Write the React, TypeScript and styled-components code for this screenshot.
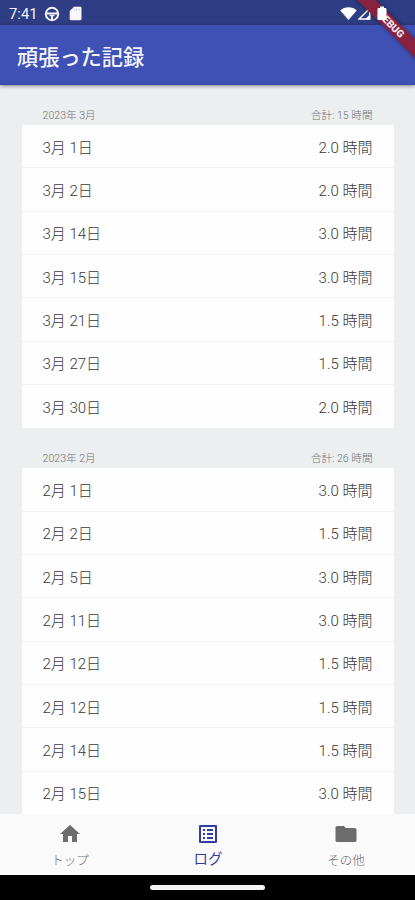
import React from 'react';
import styled, { createGlobalStyle } from 'styled-components';

const GlobalStyle = createGlobalStyle`
  * { box-sizing: border-box; }
  body { margin: 0; background: #eceef0; }
`;

const Screen = styled.div`
  position: relative;
  display: flex;
  flex-direction: column;
  width: 415px;
  height: 900px;
  overflow: hidden;
  background: #eceef0;
  font-family: Roboto, 'Noto Sans CJK JP', sans-serif;
`;

const StatusBar = styled.div`
  flex: none;
  display: flex;
  align-items: center;
  height: 25px;
  padding: 2px 27px 0 9px;
  background: #2f3d84;
  color: #f2f3fa;
  font-size: 14.8px;
`;

const StatusIcon = styled.svg<{ $gap: number }>`
  flex: none;
  display: block;
  margin-left: ${(p) => p.$gap}px;
`;

const Spacer = styled.div`
  flex: 1;
`;

const BatteryIcon = styled(StatusIcon)`
  position: relative;
  z-index: 3;
`;

const AppBar = styled.header`
  flex: none;
  display: flex;
  align-items: center;
  position: relative;
  z-index: 1;
  height: 60px;
  padding: 6px 17px 0;
  background: #3f51b5;
  border-bottom: 1px solid #3445a6;
  box-shadow: 0 1px 4px rgba(0, 0, 0, 0.45);
`;

const Title = styled.h1`
  margin: 0;
  color: #f4f5fc;
  font-size: 21.2px;
  font-weight: 500;
  line-height: 30px;
`;

const Log = styled.main`
  flex: 1;
  min-height: 0;
  overflow: hidden;
  padding: 20px 21px 0 21.5px;
`;

const Month = styled.section`
  margin-bottom: 20px;
`;

const MonthHeader = styled.div`
  display: flex;
  justify-content: space-between;
  height: 20px;
  padding: 1px 21.5px 0 21px;
  color: #6e7072;
  font-size: 10.6px;
  font-weight: 300;
  line-height: 20px;
`;

const Card = styled.div`
  background: #fefefe;
  border-radius: 2px;
`;

const Row = styled.div`
  display: flex;
  align-items: center;
  justify-content: space-between;
  height: 43.33px;
  padding: 0 21.5px 0 21px;
  border-bottom: 1px solid #f1f3f3;
  color: #383838;
  font-size: 15px;
  font-weight: 300;

  &:last-child { border-bottom-color: transparent; }
`;

const NavBar = styled.nav`
  flex: none;
  display: grid;
  grid-template-columns: repeat(3, 1fr);
  height: 61px;
  padding-left: 1px;
  background: #fafafa;
`;

const NavItem = styled.div<{ $active?: boolean }>`
  display: flex;
  flex-direction: column;
  align-items: center;
  gap: 1px;
  padding-top: 8px;
  color: ${(p) => (p.$active ? '#303f9f' : '#6c6c6c')};
  font-size: ${(p) => (p.$active ? 14.4 : 12.5)}px;
  font-weight: ${(p) => (p.$active ? 400 : 300)};
  line-height: ${(p) => (p.$active ? 25 : 27)}px;
`;

const NavIcon = styled.svg`
  flex: none;
  display: block;
  fill: currentColor;
`;

const GestureBar = styled.div`
  flex: none;
  display: flex;
  justify-content: center;
  height: 25px;
  padding-top: 10px;
  background: #000;
`;

const GesturePill = styled.div`
  width: 115px;
  height: 5px;
  border-radius: 3px;
  background: #f3f3f3;
`;

const Ribbon = styled.div`
  position: absolute;
  z-index: 2;
  top: 18px;
  left: 340.5px;
  width: 100px;
  height: 13px;
  transform: rotate(45deg);
  background: #8b2140;
  box-shadow: 0 0 5px rgba(0, 0, 0, 0.4);
  color: #eee4ea;
  font-size: 10.2px;
  font-weight: 900;
  line-height: 13px;
  text-align: center;
`;

type Entry = [string, string];

const months: { name: string; total: string; entries: Entry[] }[] = [
  {
    name: '2023年 3月',
    total: '合計: 15 時間',
    entries: [
      ['3月 1日', '2.0'],
      ['3月 2日', '2.0'],
      ['3月 14日', '3.0'],
      ['3月 15日', '3.0'],
      ['3月 21日', '1.5'],
      ['3月 27日', '1.5'],
      ['3月 30日', '2.0'],
    ],
  },
  {
    name: '2023年 2月',
    total: '合計: 26 時間',
    entries: [
      ['2月 1日', '3.0'],
      ['2月 2日', '1.5'],
      ['2月 5日', '3.0'],
      ['2月 11日', '3.0'],
      ['2月 12日', '1.5'],
      ['2月 12日', '1.5'],
      ['2月 14日', '1.5'],
      ['2月 15日', '3.0'],
    ],
  },
];

const navItems = [
  { label: 'トップ', path: 'M10 20v-6h4v6h5v-8h3L12 3 2 12h3v8z' },
  {
    label: 'ログ',
    active: true,
    path: 'M11 7h6v2h-6zm0 4h6v2h-6zm0 4h6v2h-6zM7 7h2v2H7zm0 4h2v2H7zm0 4h2v2H7zM20.1 3H3.9c-.5 0-.9.4-.9.9v16.2c0 .4.4.9.9.9h16.2c.4 0 .9-.5.9-.9V3.9c0-.5-.5-.9-.9-.9zM19 19H5V5h14v14z',
  },
  {
    label: 'その他',
    path: 'M9.8 4H3.300c-1 0-1.800.8-1.800 1.800v12.400c0 1 .8 1.800 1.800 1.800h17.400c1 0 1.800-.8 1.800-1.800V7.800c0-1-.8-1.800-1.800-1.800h-8.900z',
  },
];

export default function App() {
  return (
    <Screen>
      <GlobalStyle />
      <StatusBar>
        <span>7:41</span>
        <StatusIcon $gap={6} width="16" height="16" viewBox="0 0 16 16" fill="none" stroke="#f2f3fa">
          <circle cx="8" cy="8" r="6.2" strokeWidth="2" />
          <path d="M2 7.500h12M8 10v4" strokeWidth="2" />
          <path d="M5.500 9.500h5" strokeWidth="1.500" />
        </StatusIcon>
        <StatusIcon $gap={9} width="13" height="15" viewBox="0 0 13 15" fill="#f8f8fc">
          <path d="M5 .8h6.200c.7 0 1.300.5 1.300 1.200v11c0 .7-.6 1.200-1.300 1.200H2c-.7 0-1.300-.5-1.300-1.200V5z" />
          <path d="M5 2.500v2M7.500 2.500v2M10 2.500v2" stroke="#b9bedb" strokeWidth=".8" />
        </StatusIcon>
        <Spacer />
        <StatusIcon $gap={0} width="18" height="15" viewBox="0 0 18 15" fill="#fff">
          <path d="M8.500 14 .3 4.500C2.500 2.200 5.500 1.200 8.500 1.200s6 1 8.200 3.300z" />
        </StatusIcon>
        <StatusIcon $gap={0} width="14" height="15" viewBox="0 0 14 15" fill="none" stroke="#fff">
          <path d="M11.700 2.500V13H1z" strokeWidth="1.500" />
          <path d="M12.200 8v5.500H7z" fill="#fff" stroke="none" />
        </StatusIcon>
        <BatteryIcon $gap={5} width="11" height="15" viewBox="0 0 11 15" fill="#fff">
          <path d="M3 .5h4V2h1c.8 0 1.500.5 1.500 1.300v9.500c0 .8-.6 1.200-1.300 1.200H1.800C1 14 .5 13.600.5 12.800V3.300C.5 2.500 1 2 1.800 2H3z" />
        </BatteryIcon>
      </StatusBar>
      <AppBar>
        <Title>頑張った記録</Title>
      </AppBar>
      <Log>
        {months.map((month) => (
          <Month key={month.name}>
            <MonthHeader>
              <span>{month.name}</span>
              <span>{month.total}</span>
            </MonthHeader>
            <Card>
              {month.entries.map(([date, hours], i) => (
                <Row key={i}>
                  <span>{date}</span>
                  <span>{hours} 時間</span>
                </Row>
              ))}
            </Card>
          </Month>
        ))}
      </Log>
      <NavBar>
        {navItems.map((item) => (
          <NavItem key={item.label} $active={item.active}>
            <NavIcon width="24" height="24" viewBox="0 0 24 24">
              <path d={item.path} />
            </NavIcon>
            {item.label}
          </NavItem>
        ))}
      </NavBar>
      <GestureBar>
        <GesturePill />
      </GestureBar>
      <Ribbon>DEBUG</Ribbon>
    </Screen>
  );
}
